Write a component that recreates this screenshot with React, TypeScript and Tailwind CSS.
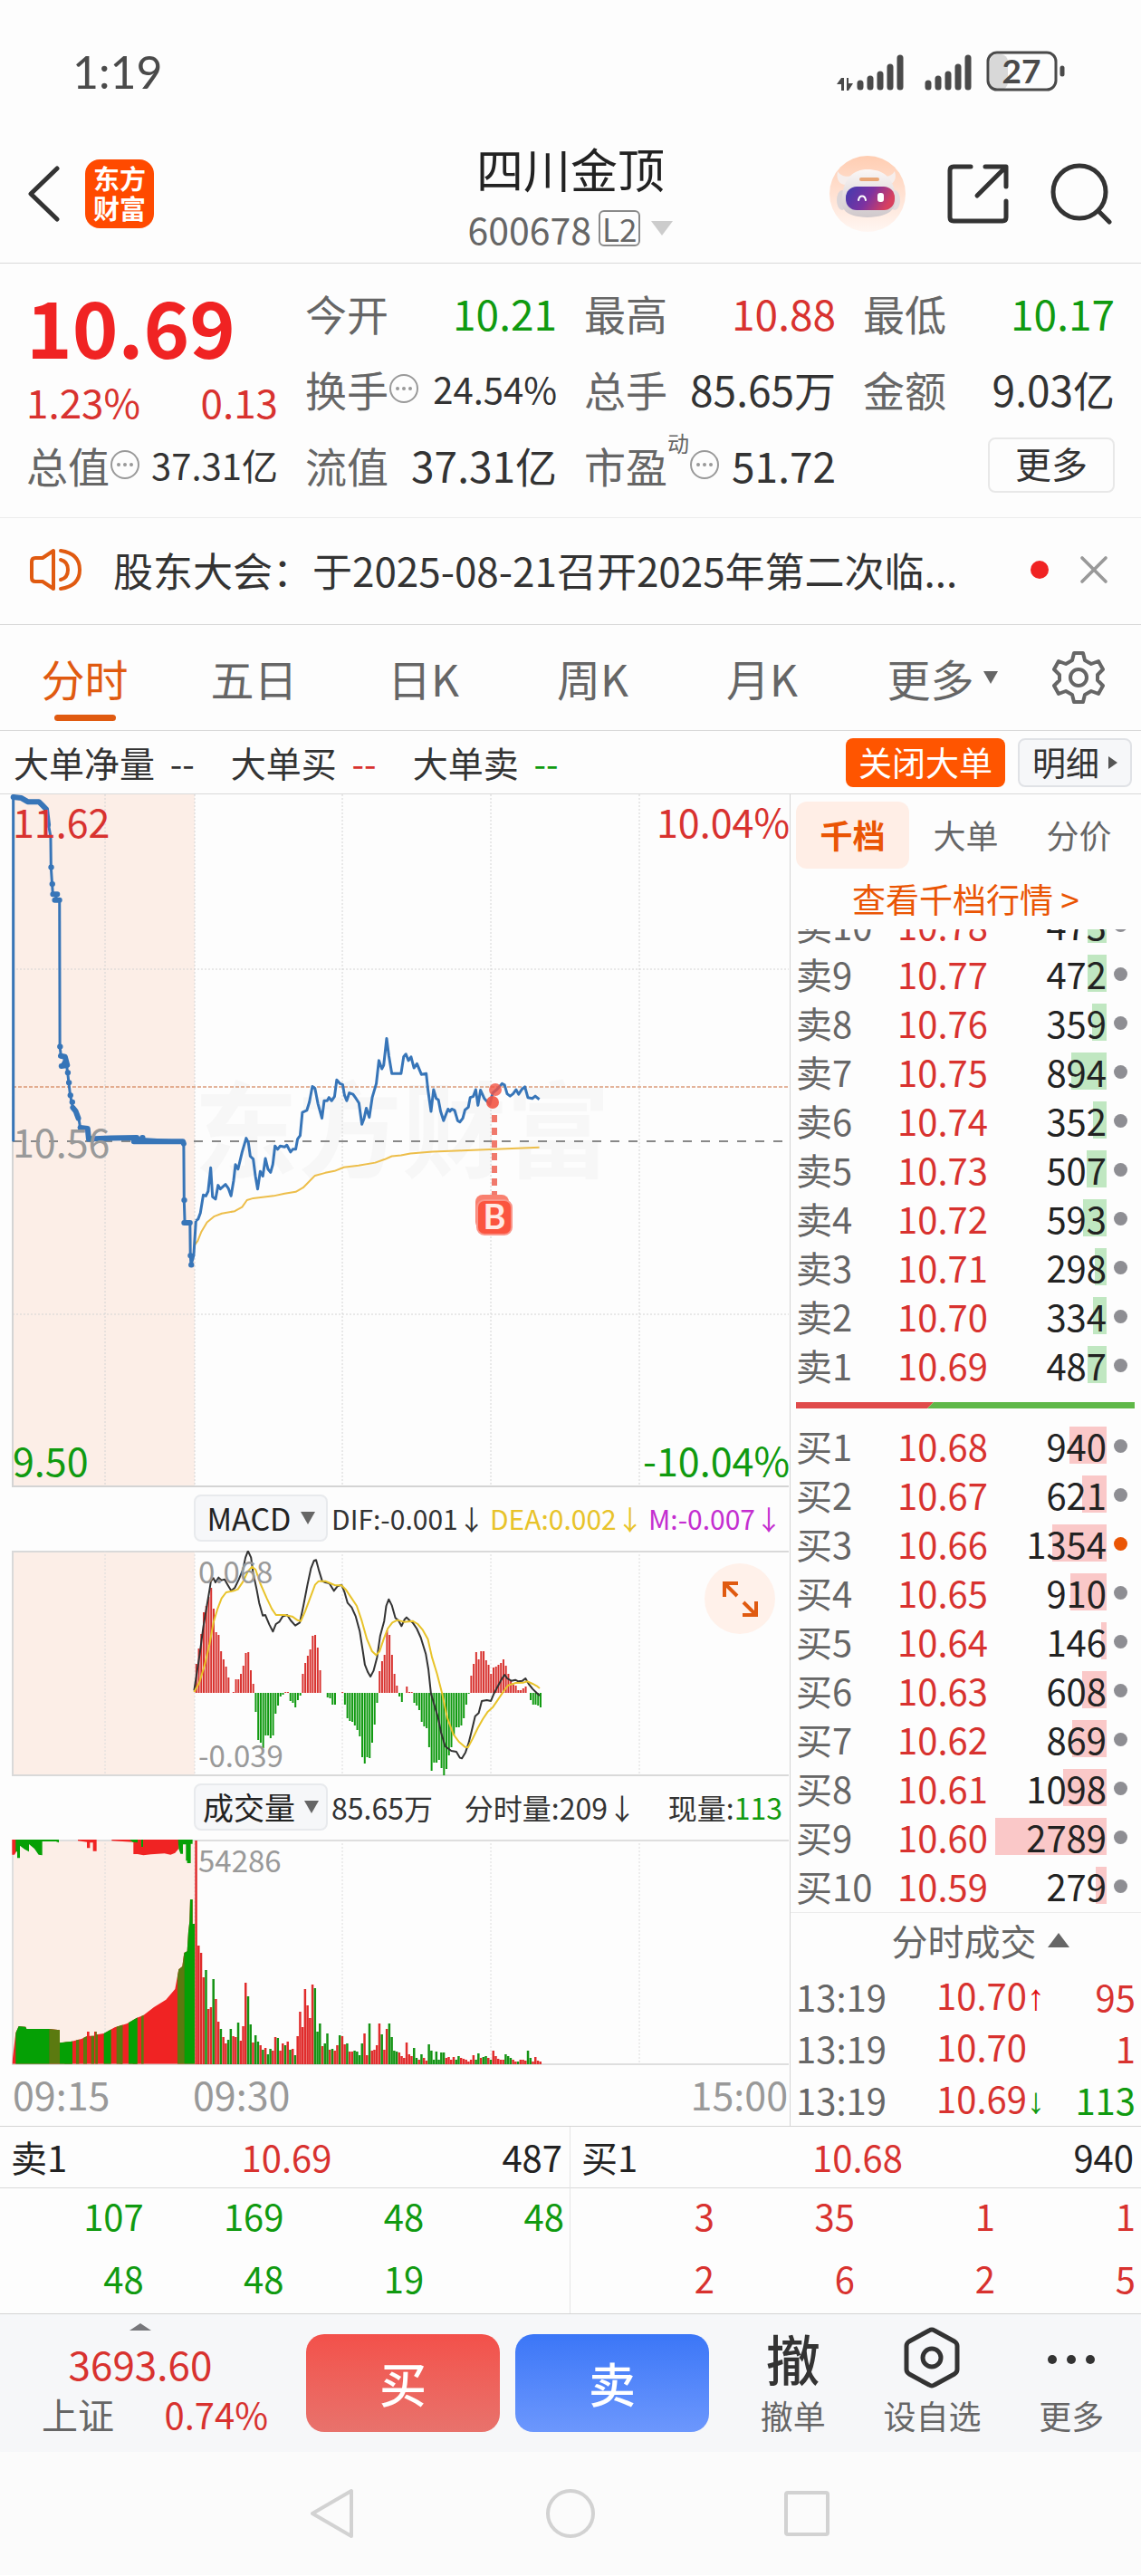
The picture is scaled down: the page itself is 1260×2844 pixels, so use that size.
import React, { useState } from 'react';
import { X } from 'lucide-react';
import clsx from 'clsx';

const MAX_VOLUME = 2789;

const asks = [
  { label: '卖10', price: '10.78', volume: 473 },
  { label: '卖9', price: '10.77', volume: 472 },
  { label: '卖8', price: '10.76', volume: 359 },
  { label: '卖7', price: '10.75', volume: 894 },
  { label: '卖6', price: '10.74', volume: 352 },
  { label: '卖5', price: '10.73', volume: 507 },
  { label: '卖4', price: '10.72', volume: 593 },
  { label: '卖3', price: '10.71', volume: 298 },
  { label: '卖2', price: '10.70', volume: 334 },
  { label: '卖1', price: '10.69', volume: 487 },
];

const bids = [
  { label: '买1', price: '10.68', volume: 940 },
  { label: '买2', price: '10.67', volume: 621 },
  { label: '买3', price: '10.66', volume: 1354, hot: true },
  { label: '买4', price: '10.65', volume: 910 },
  { label: '买5', price: '10.64', volume: 146 },
  { label: '买6', price: '10.63', volume: 608 },
  { label: '买7', price: '10.62', volume: 869 },
  { label: '买8', price: '10.61', volume: 1098 },
  { label: '买9', price: '10.60', volume: 2789 },
  { label: '买10', price: '10.59', volume: 279 },
];

const trades = [
  { time: '13:19', price: '10.70', arrow: '↑', volume: 95, up: true },
  { time: '13:19', price: '10.70', arrow: '', volume: 1, up: true },
  { time: '13:19', price: '10.69', arrow: '↓', volume: 113, up: false },
];

// MACD histogram, one value per minute
const macdBars = [
  32, 49, 65, 89, 96, 106, 116, 93, 67, 64, 46, 37, 29, 17, 0, 1, 15, 15, 21, 30, 44, 45, 25, 10, -21, -52, -55, -61,
  -47, -47, -50, -47, -23, -14, -4, -2, 1, 1, -9, -11, -16, -8, -3, 21, 33, 41, 48, 63, 64, 50, 25, 0, 0, -5, -6, -13,
  -13, 0, 0, 1, -13, -28, -31, -32, -36, -41, -48, -71, -78, -71, -72, -55, -35, -11, 24, 35, 42, 69, 64, 42, 21, 8,
  -4, -10, 0, 7, 1, 1, -11, -14, -19, -32, -37, -39, -60, -86, -77, -77, -74, -83, -91, -84, -69, -60, -47, -38, -38,
  -36, -28, -13, -1, 19, 32, 45, 37, 46, 46, 36, 31, 21, 28, 29, 31, 33, 37, 30, 21, 13, 9, 8, 3, 3, 5, 7, 0, -8, -13,
  -13, -14, -16,
];

// Volume per minute, a negative value is a falling minute
const volumeBars = [
  247, 131, 123, 96, -104, 61, 63, -94, 72, 47, -39, 30, 23, -27, -39, 31, 30, -46, 26, 42, 90, -75, -44, 24, -32, -25,
  21, -16, 18, -11, -17, 15, 30, -29, 15, 23, -21, 25, -16, 17, -10, 31, 58, 41, 83, 65, 51, 88, -84, -36, -45, 20, -23,
  -34, 16, -17, 15, 21, -32, 31, 22, -23, 14, 14, -15, -14, -10, -23, 34, 10, -45, 15, 16, 21, 45, -33, 16, 39, -45,
  -30, -15, -14, 13, 9, 7, 24, 11, 9, -18, -7, 5, -11, 7, 4, -22, -15, -5, -14, -5, -13, -13, 7, 8, 5, 8, -5, -9, 7, 6,
  5, 3, 5, 10, -5, -12, 7, -8, -9, 7, -5, 15, 9, 6, 5, 5, -11, -9, -7, 5, 3, -3, 5, 5, 4, -15, -7, 3, 8, 4, 3,
];

const auctionPath =
  'M36,785 36,38 58,42 75,50 105,50 115,58 125,65 130,95 137,125 138,192 141,228 143,250 155,250 148,263 161,263 162,580 165,600 178,605 166,622 180,620 183,636 186,658 190,685 197,712 205,720 213,735 217,755 237,757 240,780 300,778 370,777 385,780 495,785 497,790 498,912 500,961 514,962 515,1032 517,1052 524,1032 530,957';

const auctionHeavyPath =
  'M36,40 58,42 75,50 105,50 115,58 125,66 130,100 M143,250 155,250 M148,263 161,263 M164,600 176,602 182,620 166,622 M197,712 205,720 212,735 M217,755 237,757 240,780 300,778 370,777 M362,785 495,785 497,790 M498,961 514,961 M138,192h1 M141,228h1 M162,580h1 M183,636h1 M186,658h1 M190,685h1 M195,700h1 M385,777h1 M498,912h1 M515,1032h1 M517,1052h1';

const pricePath =
  'M530,957 536,953 542,940 550,901 557,903 563,893 570,842 575,905 583,910 590,880 596,888 610,878 618,887 625,903 632,870 637,835 644,845 655,808 666,778 672,788 677,817 685,823 691,860 697,888 704,850 711,860 718,822 725,845 732,852 738,835 744,795 751,802 758,795 770,797 776,793 786,808 792,802 800,802 805,780 812,772 818,722 830,718 837,700 845,666 852,670 860,703 871,735 877,697 885,697 890,690 897,697 905,688 911,652 920,660 927,662 932,685 938,697 945,680 955,683 963,692 971,702 979,748 985,735 991,713 999,733 1007,690 1018,660 1025,610 1033,628 1038,620 1046,562 1052,600 1060,638 1085,638 1092,602 1098,596 1105,610 1112,602 1120,626 1128,617 1140,640 1153,638 1158,675 1166,720 1173,673 1180,692 1186,695 1192,720 1200,740 1212,715 1217,720 1222,715 1230,718 1238,740 1244,743 1252,735 1258,717 1267,711 1272,690 1280,688 1287,673 1293,707 1300,674 1310,692 1325,705 1333,680 1345,672 1358,660 1365,663 1372,682 1380,687 1388,682 1396,673 1403,683 1412,672 1420,667 1428,690 1440,692 1448,687 1459,694';

const averagePath =
  'M526,1010 535,1000 545,980 560,960 580,947 600,941 635,936 655,927 668,912 685,908 740,903 770,898 800,894 820,885 835,873 852,859 880,853 905,849 930,841 970,837 1015,831 1040,824 1060,817 1085,815 1110,811 1170,807 1250,805 1340,802 1459,798';

const difPath =
  'M382,680 387,625 393,560 400,470 407,400 412,350 415,318 420,308 424,322 430,306 436,315 442,312 448,330 455,350 462,340 470,312 478,280 483,240 488,218 494,240 498,290 505,345 510,390 517,432 522,430 530,462 537,485 543,460 550,452 556,435 565,430 572,448 581,465 590,455 597,400 605,330 612,275 618,250 622,248 628,285 634,318 640,322 648,325 657,350 664,335 672,330 678,355 684,390 692,405 700,435 708,485 714,550 718,595 724,620 729,634 735,615 742,570 748,500 756,450 760,400 765,378 771,398 778,440 784,448 790,467 796,445 800,438 806,448 812,455 820,475 828,505 838,560 843,610 848,690 855,730 862,770 868,820 876,865 888,880 898,883 905,903 909,905 916,885 922,855 928,815 935,765 942,755 948,715 958,712 966,715 972,690 980,665 988,640 993,628 998,640 1006,648 1014,645 1020,650 1028,648 1034,640 1041,660 1048,675 1056,688 1062,697';

const deaPath =
  'M382,685 392,655 402,600 412,530 420,455 428,410 436,375 445,355 460,350 468,345 478,320 488,285 496,270 503,280 512,325 525,375 535,410 543,430 560,430 575,435 585,447 592,450 600,420 610,375 620,330 627,318 640,318 650,325 660,332 672,332 680,345 692,375 702,400 712,450 722,510 732,550 740,563 747,550 755,510 763,475 772,455 782,447 795,453 812,450 822,460 832,480 842,510 850,570 860,625 870,690 880,770 892,825 903,850 915,867 921,868 930,840 940,805 950,775 960,750 970,735 980,710 990,685 1000,663 1015,655 1030,654 1038,650 1048,658 1056,665 1062,673';

// Call auction volume, [x, width] of the darker stripes
const auctionGreen = [
  [22, 112], [168, 42], [314, 24], [396, 28], [580, 38],
];
const auctionOlive = [
  [134, 34], [184, 24], [222, 10], [246, 12], [272, 10], [286, 8], [356, 20], [368, 8], [410, 16], [438, 8], [558, 22],
];

const MoreDots: React.FC = () => (
  <svg className="w-[34px] h-[34px] shrink-0" viewBox="0 0 34 34">
    <circle cx="17" cy="17" r="15" fill="none" stroke="#999" strokeWidth="2" />
    <circle cx="10" cy="17" r="2" fill="#999" />
    <circle cx="17" cy="17" r="2" fill="#999" />
    <circle cx="24" cy="17" r="2" fill="#999" />
  </svg>
);

const StatusBar: React.FC = () => (
  <div className="flex h-[142px] items-center justify-between pt-4 pl-20 pr-[84px] text-[#4a4a4a]">
    <span className="text-[50px] leading-none font-[Lato,sans-serif]">1:19</span>
    <svg className="h-[50px] w-[252px]" viewBox="0 0 252 50">
      <g stroke="#4a4a4a" strokeWidth="7" strokeLinecap="round">
        <path d="M26 38V42M37 33V42M48 28V42M59 20V42M70 10V42" />
        <path d="M101 38V42M112 33V42M123 28V42M134 20V42M145 10V42" />
      </g>
      <path d="M0 39L5 32H8V46H5V39ZM11 32H13V38H18L13 46H11Z" fill="#4a4a4a" />
      <rect x="169" y="6" width="20" height="39" rx="8" fill="#d8d8d8" />
      <rect x="167" y="4" width="75" height="41" rx="10" fill="none" stroke="#4a4a4a" strokeWidth="3" />
      <path d="M249 21V28" stroke="#4a4a4a" strokeWidth="5" strokeLinecap="round" />
      <text x="204" y="38" fontSize="37" fontWeight="700" textAnchor="middle" fill="#4a4a4a" className="font-[Lato,sans-serif]">
        27
      </text>
    </svg>
  </div>
);

const RobotAvatar: React.FC = () => (
  <svg className="h-[84px] w-[84px]" viewBox="0 0 84 84">
    <defs>
      <linearGradient id="halo" x1="0" y1="0" x2="0" y2="1">
        <stop offset="0" stopColor="#ffcdb2" />
        <stop offset="1" stopColor="#fff6f2" />
      </linearGradient>
      <linearGradient id="visor" x1="0" y1="0" x2="1" y2="0.3">
        <stop offset="0" stopColor="#3f3cb0" />
        <stop offset="0.55" stopColor="#7d32a0" />
        <stop offset="1" stopColor="#d8405f" />
      </linearGradient>
      <linearGradient id="shell" x1="0" y1="0" x2="0" y2="1">
        <stop offset="0" stopColor="#fbf7f6" />
        <stop offset="1" stopColor="#cfc8cb" />
      </linearGradient>
    </defs>
    <circle cx="42" cy="42" r="42" fill="url(#halo)" />
    <path d="M9 17c-2 9 2 15 9 15l8-10c-8 2-14 0-17-5zM72 17c3 9-2 15-8 15l-8-10c8 2 13 0 16-5z" fill="#f6eeec" />
    <ellipse cx="14" cy="49" rx="6" ry="11" fill="#dcd6d8" />
    <ellipse cx="72" cy="49" rx="6" ry="11" fill="#e4dde0" />
    <path d="M42 15c16 0 29 8 31 30 1 14-6 22-31 23-25-1-30-9-28-23 2-20 12-30 28-30z" fill="url(#shell)" />
    <rect x="33" y="24" width="22" height="4" rx="2" fill="#e9a777" />
    <rect x="18" y="34" width="54" height="26" rx="12" fill="url(#visor)" />
    <path d="M32 49c1-6 7-6 8 0" fill="none" stroke="#fff" strokeWidth="2" strokeLinecap="round" />
    <rect x="53" y="41" width="7" height="10" rx="3" fill="#fff" />
  </svg>
);

const Header: React.FC = () => (
  <header className="grid grid-cols-3 items-center border-b border-[#d9d9d9] pt-2.5 pb-1">
    <div className="flex items-center gap-7 pb-2.5 pl-[30px]">
      <button aria-label="返回">
        <svg className="h-[62px] w-9" viewBox="0 0 36 62">
          <path d="M33 3L4 31L33 59" fill="none" stroke="#333" strokeWidth="5" strokeLinecap="round" strokeLinejoin="round" />
        </svg>
      </button>
      <div className="h-[76px] w-[76px] rounded-2xl bg-[#ff4a00] pt-1 text-center text-[29px] font-bold leading-[33px] text-white">
        <div>东方</div>
        <div>财富</div>
      </div>
    </div>
    <div className="text-center">
      <h1 className="text-[52px] leading-[68px] text-[#222]">四川金顶</h1>
      <button className="flex h-[66px] w-full items-center justify-center pb-0.5 text-[41px] leading-none text-[#666]">
        600678
        <span className="ml-2 rounded-md border-2 border-[#8a8a8a] px-0.5 text-[35px] leading-9">L2</span>
        <svg className="ml-3 h-4 w-6" viewBox="0 0 24 16">
          <path d="M0 0H24L12 16Z" fill="#ccc" />
        </svg>
      </button>
    </div>
    <div className="flex items-center justify-end gap-[46px] pr-8 pb-2.5">
      <button aria-label="助手">
        <RobotAvatar />
      </button>
      <button aria-label="分享">
        <svg className="h-[68px] w-[68px]" viewBox="0 0 68 68" fill="none" stroke="#333" strokeWidth="5" strokeLinecap="round" strokeLinejoin="round">
          <path d="M26 4H7Q3 4 3 8V60Q3 64 7 64H61Q65 64 65 60V42M42 4H65V26M64 5L33 36" />
        </svg>
      </button>
      <button aria-label="搜索">
        <svg className="h-[68px] w-[68px]" viewBox="0 0 68 68" fill="none" stroke="#333" strokeWidth="5" strokeLinecap="round">
          <circle cx="32" cy="32" r="29" />
          <path d="M53 53L65 65" />
        </svg>
      </button>
    </div>
  </header>
);

interface QuoteItemProps {
  label: string;
  value: string;
  color?: string;
  dots?: boolean;
  sup?: string;
}

const QuoteItem: React.FC<QuoteItemProps> = ({ label, value, color = 'text-[#333]', dots, sup }) => (
  <div className="flex h-[84px] items-center justify-between whitespace-nowrap">
    <dt className="flex items-center text-[46px] text-[#666]">
      {label}
      {sup && <sup className="mb-6 text-[24px]">{sup}</sup>}
      {dots && <MoreDots />}
    </dt>
    <dd className={clsx(color, dots && !sup ? 'text-[40px]' : 'text-[46px]')}>{value}</dd>
  </div>
);

const QuotePanel: React.FC = () => (
  <section className="grid grid-cols-4 gap-x-[30px] border-b border-[#ececec] px-[29px] pt-3 pb-4 leading-none">
    <div>
      <div className="flex h-28 items-center text-[86px] font-bold text-[#f02323]">10.69</div>
      <div className="flex h-14 items-center justify-between text-[44px] text-[#d8322f]">
        <span>1.23%</span>
        <span>0.13</span>
      </div>
      <dl>
        <QuoteItem label="总值" value="37.31亿" dots />
      </dl>
    </div>
    <dl>
      <QuoteItem label="今开" value="10.21" color="text-[#109a10]" />
      <QuoteItem label="换手" value="24.54%" dots />
      <QuoteItem label="流值" value="37.31亿" />
    </dl>
    <dl>
      <QuoteItem label="最高" value="10.88" color="text-[#d8322f]" />
      <QuoteItem label="总手" value="85.65万" />
      <QuoteItem label="市盈" value="51.72" sup="动" dots />
    </dl>
    <div>
      <dl>
        <QuoteItem label="最低" value="10.17" color="text-[#109a10]" />
        <QuoteItem label="金额" value="9.03亿" />
      </dl>
      <div className="flex h-[84px] items-center justify-end">
        <button className="h-[61px] rounded-lg border-2 border-[#e8e8e8] px-7 pb-1 text-[40px] text-[#333]">更多</button>
      </div>
    </div>
  </section>
);

const NewsBar: React.FC = () => (
  <div className="flex h-[118px] items-center border-b border-[#d9d9d9] pb-1 pl-[33px] pr-[26px]">
    <svg className="h-12 w-[58px] shrink-0" viewBox="0 0 58 48" fill="none" stroke="#e05a10" strokeWidth="4" strokeLinejoin="round">
      <path d="M26 3V45L14 37H6Q2 37 2 33V15Q2 11 6 11H14Z" />
      <path d="M34 13Q42 15 42 24Q42 33 34 35M34 3Q55 6 55 24Q55 42 34 45" strokeLinecap="round" />
    </svg>
    <a href="#news" className="ml-[34px] whitespace-nowrap text-[44px] leading-[66px] text-[#333]">
      股东大会：于2025-08-21召开2025年第二次临...
    </a>
    <span className="ml-auto h-5 w-5 shrink-0 rounded-full bg-[#f02323]" />
    <button aria-label="关闭" className="ml-6 shrink-0">
      <X className="h-[52px] w-[52px] text-[#999]" strokeWidth={1.7} />
    </button>
  </div>
);

const periods = ['分时', '五日', '日K', '周K', '月K', '更多'];

const PeriodTabs: React.FC = () => {
  const [active, setActive] = useState('分时');

  return (
    <nav className="flex h-[117px] border-b border-[#d9d9d9]">
      <div className="grid flex-1 grid-cols-6">
        {periods.map((period) => (
          <button
            key={period}
            onClick={() => setActive(period)}
            className={clsx(
              'relative flex items-center justify-center text-[48px] leading-none',
              period === active ? 'text-[#e05a10]' : 'text-[#666]',
              period === '更多' && 'pl-6'
            )}
          >
            {period}
            {period === '更多' && (
              <svg className="ml-2.5 h-3.5 w-4" viewBox="0 0 16 14">
                <path d="M0 0H16L8 14Z" fill="#666" />
              </svg>
            )}
            {period === active && <span className="absolute bottom-2.5 h-[7px] w-[68px] rounded-full bg-[#e05a10]" />}
          </button>
        ))}
      </div>
      <button aria-label="设置" className="flex w-[138px] items-center justify-center">
        <svg className="h-[60px] w-[60px]" viewBox="0 0 60 60" fill="none" stroke="#666" strokeWidth="4" strokeLinejoin="round">
          <path d="M25 3H35L37 11L44 15L52 12L57 21L51 27V33L57 39L52 48L44 45L37 49L35 57H25L23 49L16 45L8 48L3 39L9 33V27L3 21L8 12L16 15L23 11Z" />
          <circle cx="30" cy="30" r="9" />
        </svg>
      </button>
    </nav>
  );
};

const BigOrderBar: React.FC = () => (
  <div className="flex h-[70px] items-center justify-between border-b border-[#d9d9d9] pl-[15px] pr-2.5 text-[39px] leading-none text-[#333]">
    <div className="flex gap-10">
      <span>大单净量 <span className="ml-2">--</span></span>
      <span>大单买 <span className="ml-2 text-[#d8322f]">--</span></span>
      <span>大单卖 <span className="ml-2 text-[#109a10]">--</span></span>
    </div>
    <div className="flex gap-3.5 text-[37px]">
      <button className="h-[54px] rounded-lg bg-[#ff5500] px-3.5 text-white">关闭大单</button>
      <button className="flex h-[54px] items-center gap-2.5 rounded-lg border-2 border-[#e0e2e6] bg-[#f6f7f9] px-3.5">
        明细
        <svg className="h-3.5 w-2.5" viewBox="0 0 10 14">
          <path d="M0 0V14L10 7Z" fill="#555" />
        </svg>
      </button>
    </div>
  </div>
);

const gridX = [378, 542, 706];

const PriceChart: React.FC = () => (
  <div className="relative">
    <span className="absolute top-[307px] left-[214px] text-[115px] font-bold leading-none text-[#f7f7f7]">东方财富</span>
    <svg className="relative block h-[765px] w-full" viewBox="0 0 872 765" preserveAspectRatio="none">
      <rect x="14" y="0" width="201" height="764" fill="#fceee7" />
      <g stroke="#d4d4d4" strokeDasharray="2 2">
        {[116, 215, ...gridX].map((x) => (
          <path key={x} d={`M${x} 0V764`} />
        ))}
        <path d="M14 193H871M14 574H871" />
      </g>
      <path d="M14 0V764H871" fill="none" stroke="#d4d4d4" strokeWidth="2" />
      <path d="M14 383H871" stroke="#888" strokeWidth="2" strokeDasharray="10 10" />
      <path d="M14 323H871" stroke="#c96a38" strokeWidth="1" strokeDasharray="4 2" />
      <g transform="scale(.4082 .5102) translate(0 -34)" fill="none" strokeLinejoin="round">
        <path d={averagePath} stroke="#edbe4a" strokeWidth="2" vectorEffect="non-scaling-stroke" />
        <path d={auctionPath} stroke="#3775b8" strokeWidth="3" vectorEffect="non-scaling-stroke" />
        <path d={auctionHeavyPath} stroke="#3775b8" strokeWidth="6" strokeLinecap="round" vectorEffect="non-scaling-stroke" />
        <path d={pricePath} stroke="#3775b8" strokeWidth="3" vectorEffect="non-scaling-stroke" />
      </g>
      <path d="M546 354V442" stroke="#f0796c" strokeWidth="6" strokeDasharray="8 6" />
      <circle cx="544" cy="340" r="7" fill="#f25443" fillOpacity="0.9" />
      <circle cx="547" cy="326" r="7" fill="#f25443" fillOpacity="0.8" />
      <rect x="525" y="442" width="37" height="38" rx="8" fill="#f9806f" />
      <rect x="527" y="448" width="38" height="38" rx="8" fill="#fb543f" stroke="#f9958a" strokeWidth="2" />
      <text x="546" y="480" fontSize="38" fontWeight="700" textAnchor="middle" fill="#ffe9e5" className="font-[Lato,sans-serif]">
        B
      </text>
    </svg>
    <div className="absolute inset-0 flex flex-col justify-between pb-0.5 pl-3.5 text-[43px] leading-[58px]">
      <div className="flex justify-between text-[#d8322f]">
        <span>11.62</span>
        <span>10.04%</span>
      </div>
      <span className="text-[#999]">10.56</span>
      <div className="flex justify-between text-[#109a10]">
        <span>9.50</span>
        <span>-10.04%</span>
      </div>
    </div>
  </div>
);

const IndicatorSelect: React.FC<{ name: string; children: React.ReactNode }> = ({ name, children }) => (
  <div className="flex h-[70px] items-center pb-0.5 pl-[214px] pr-2 leading-none text-[#333]">
    <button className="flex h-[52px] w-[148px] shrink-0 items-center justify-center gap-2.5 rounded-lg border-2 border-[#e8eaed] bg-[#f6f7f9] text-[34px] text-[#222]">
      {name}
      <svg className="h-3.5 w-4" viewBox="0 0 16 14">
        <path d="M0 0H16L8 14Z" fill="#666" />
      </svg>
    </button>
    {children}
  </div>
);

const MacdChart: React.FC = () => (
  <div className="relative">
    <svg className="block h-[249px] w-full" viewBox="0 0 872 249" preserveAspectRatio="none">
      <rect x="14" y="0" width="201" height="248" fill="#fceee7" />
      <path d="M14 1H871M14 0V248H871" fill="none" stroke="#d9d9d9" strokeWidth="2" />
      <g stroke="#dcdcdc" strokeDasharray="2 2">
        {[116, 215, ...gridX].map((x) => (
          <path key={x} d={`M${x} 0V248`} />
        ))}
      </g>
      {macdBars.map((value, i) => (
        <rect
          key={i}
          x={215.8 + i * 2.735}
          y={value > 0 ? 157 - value : 157}
          width="2"
          height={Math.abs(value)}
          fill={value > 0 ? '#d8322f' : '#109a10'}
        />
      ))}
      <g transform="scale(.5612 .3333) translate(0 -217)" fill="none" strokeLinejoin="round">
        <path d={difPath} stroke="#333" strokeWidth="2" vectorEffect="non-scaling-stroke" />
        <path d={deaPath} stroke="#e8c32a" strokeWidth="2" vectorEffect="non-scaling-stroke" />
      </g>
    </svg>
    <div className="absolute inset-0 flex flex-col justify-between pt-0.5 pb-1 pl-[219px] text-[33px] leading-10 text-[#999]">
      <span>0.068</span>
      <span>-0.039</span>
    </div>
    <button aria-label="全屏" className="absolute top-3.5 right-4 h-[78px] w-[78px] rounded-full bg-[#fff1ea]">
      <svg className="h-full w-full" viewBox="0 0 78 78" fill="none" stroke="#e05a10" strokeWidth="4">
        <path d="M22 37V22H37M23 23L36 36M57 42V57H42M56 56L43 43" />
      </svg>
    </button>
  </div>
);

const VolumeChart: React.FC = () => (
  <div className="relative">
    <svg className="block h-[249px] w-full" viewBox="0 0 872 249" preserveAspectRatio="none">
      <rect x="14" y="0" width="201" height="248" fill="#fceee7" />
      <path d="M14 1H871M14 0V248H871" fill="none" stroke="#dedede" strokeWidth="2" />
      <g stroke="#dcdcdc" strokeDasharray="2 2">
        {[116, 215, ...gridX].map((x) => (
          <path key={x} d={`M${x} 0V248`} />
        ))}
      </g>
      <clipPath id="auctionArea">
        <path d="M10,773V770L22,670 32,648 55,650 58,657 134,657 168,661V703L205,699 240,690 258,681V666H266V680H282V666H290V676L314,672 350,652 390,640 424,620 445,612 480,585 520,560 550,525 562,460 574,450 580,405 590,400 594,335 598,300 600,228H608V309H615V773Z" />
      </clipPath>
      {/* Call auction, drawn at three units per pixel */}
      <g transform="translate(10 -10) scale(.3333)">
        <g clipPath="url(#auctionArea)">
          <rect x="10" y="200" width="606" height="574" fill="#f02323" />
          {auctionOlive.map(([x, w]) => (
            <rect key={x} x={x} y="200" width={w} height="574" fill="#5b7a10" />
          ))}
          {auctionGreen.map(([x, w]) => (
            <rect key={x} x={x} y="200" width={w} height="574" fill="#05a005" />
          ))}
        </g>
        <path d="M10,30H24V70L18,80H10ZM228,30H290V68H278V40H268V58H258V38L228,34ZM340,30H562V60L550,74 535,80 515,76 470,79 445,82 426,78H412V38L340,34Z" fill="#f02323" />
        <path d="M22,30H165V40L155,36 110,36V82L98,80 84,60 66,45V70L52,62 36,50V91H27V70H22ZM400,30H426V40L410,38ZM438,30H444V54H438ZM560,30H608V44H602V108H590V100H586V46H576V77H568L562,60Z" fill="#05a005" />
      </g>
      {volumeBars.map((value, i) => (
        <rect
          key={i}
          x={215.3 + i * 2.735}
          y={248 - Math.abs(value)}
          width="2.5"
          height={Math.abs(value)}
          fill={value > 0 ? '#e02c2c' : '#149314'}
        />
      ))}
    </svg>
    <span className="absolute top-0.5 left-[219px] text-[33px] leading-10 text-[#999]">54286</span>
  </div>
);

const Charts: React.FC = () => (
  <div className="min-w-0 flex-1">
    <PriceChart />
    <IndicatorSelect name="MACD">
      <div className="ml-1 flex flex-1 justify-between whitespace-nowrap text-[30px]">
        <span>DIF:-0.001↓</span>
        <span className="text-[#e8c32a]">DEA:0.002↓</span>
        <span className="text-[#c42fd0]">M:-0.007↓</span>
      </div>
    </IndicatorSelect>
    <MacdChart />
    <IndicatorSelect name="成交量">
      <div className="ml-1 flex flex-1 justify-between whitespace-nowrap text-[32px]">
        <span>85.65万</span>
        <span>分时量:209↓</span>
        <span>
          现量:<span className="text-[#109a10]">113</span>
        </span>
      </div>
    </IndicatorSelect>
    <VolumeChart />
    <div className="flex h-[67px] items-center pb-1 pl-3.5 pr-0.5 text-[43px] leading-none text-[#999]">
      <span className="w-[199px]">09:15</span>
      <span>09:30</span>
      <span className="ml-auto">15:00</span>
    </div>
  </div>
);

interface Level {
  label: string;
  price: string;
  volume: number;
  hot?: boolean;
}

const DepthTable: React.FC<{ levels: Level[]; barColor: string }> = ({ levels, barColor }) => (
  <table className="w-full shrink-0 table-fixed text-[40px] leading-none">
    <colgroup>
      <col className="w-[118px]" />
      <col className="w-[103px]" />
      <col />
      <col className="w-[38px]" />
    </colgroup>
    <tbody>
      {levels.map((level) => (
        <tr key={level.label} className="h-[54px]">
          <td className="pl-1.5 text-[#666]">{level.label}</td>
          <td className="text-[#d8322f]">{level.price}</td>
          <td className="relative text-right text-[#222]">
            <span
              className={clsx('absolute right-0 top-1.5 h-[41px]', barColor)}
              style={{ width: `${(level.volume / MAX_VOLUME) * 96}%` }}
            />
            <span className="relative">{level.volume}</span>
          </td>
          <td>
            <span className={clsx('ml-2 block h-[15px] w-[15px] rounded-full', level.hot ? 'bg-[#ea5504]' : 'bg-[#8e8e93]')} />
          </td>
        </tr>
      ))}
    </tbody>
  </table>
);

const OrderBook: React.FC = () => (
  <aside className="w-[388px] shrink-0 border-l border-[#d4d4d4]">
    <div className="flex px-1.5 pt-2 text-[36px] leading-none text-[#666]">
      <button className="h-[74px] w-[125px] rounded-xl bg-[#ffeee6] pb-0.5 font-bold text-[#ea5504]">千档</button>
      <button className="flex-1 pb-0.5">大单</button>
      <button className="flex-1 pb-0.5">分价</button>
    </div>
    <a href="#depth" className="flex h-[67px] items-center justify-center text-[37px] leading-none text-[#ea5504]">
      查看千档行情 &gt;
    </a>
    <div className="flex h-[508px] flex-col justify-end overflow-hidden">
      <DepthTable levels={asks} barColor="bg-[#c0e7c1]" />
    </div>
    <svg className="mt-3.5 mb-3.5 block h-[7px] w-full" viewBox="0 0 387 7" preserveAspectRatio="none">
      <path d="M6 0H158L151 7H6Z" fill="#e04b4b" />
      <path d="M158 0H380V7H151Z" fill="#5fb848" />
    </svg>
    <DepthTable levels={bids} barColor="bg-[#fac8c8]" />
    <button className="mt-0.5 flex h-[64px] w-full items-center justify-center gap-3 border-t border-[#ececec] pb-1 pl-8 text-[40px] leading-none text-[#666]">
      分时成交
      <svg className="h-4 w-6" viewBox="0 0 24 16">
        <path d="M0 16H24L12 0Z" fill="#666" />
      </svg>
    </button>
    <table className="w-full table-fixed text-[40px] leading-none">
      <tbody>
        {trades.map((trade, i) => (
          <tr key={i} className="h-[57px]">
            <td className="w-[161px] pl-1.5 text-[#666]">{trade.time}</td>
            <td className="w-[130px] whitespace-nowrap text-[#d8322f]">
              {trade.price}
              <span className={clsx("font-['Liberation_Sans',sans-serif] font-bold", trade.up ? 'text-[#e01010]' : 'text-[#109a10]')}>
                {trade.arrow}
              </span>
            </td>
            <td className={clsx('pr-1.5 text-right', trade.up ? 'text-[#d8322f]' : 'text-[#109a10]')}>{trade.volume}</td>
          </tr>
        ))}
      </tbody>
    </table>
  </aside>
);

interface QueueProps {
  label: string;
  price: string;
  total: number;
  color: string;
  rows: (number | null)[][];
}

const Queue: React.FC<QueueProps> = ({ label, price, total, color, rows }) => (
  <div className="border-r border-[#e4e4e4] last:border-r-0">
    <div className="grid h-[68px] grid-cols-3 items-center border-b border-[#d9d9d9] pb-0.5 pl-3 pr-2">
      <span>{label}</span>
      <span className="text-center text-[#d8322f]">{price}</span>
      <span className="text-right">{total}</span>
    </div>
    <div className="pl-2.5">
      <table className="w-full table-fixed">
        <tbody>
          {rows.map((row, i) => (
            <tr key={i} className="h-[69px]">
              {row.map((value, j) => (
                <td key={j} className={clsx('pr-1.5 pb-2.5 text-right', color)}>
                  {value}
                </td>
              ))}
            </tr>
          ))}
        </tbody>
      </table>
    </div>
  </div>
);

const ActionBar: React.FC = () => (
  <footer className="flex h-[153px] items-center border-t border-[#d4d4d4] bg-[#f6f7f9] leading-none">
    <button className="flex h-full w-[310px] flex-col items-center pt-2.5 text-[#d8322f]">
      <svg className="h-2 w-6" viewBox="0 0 24 8">
        <path d="M0 8H24L12 0Z" fill="#77777b" />
      </svg>
      <span className="mt-2 text-[44px] leading-[56px]">3693.60</span>
      <span className="ml-8 flex w-[250px] justify-between text-[40px] leading-[56px]">
        <span className="text-[#666]">上证</span>
        <span>0.74%</span>
      </span>
    </button>
    <div className="ml-7 flex gap-[17px] text-[52px] font-medium text-white">
      <button className="h-[108px] w-[214px] rounded-[20px] bg-gradient-to-b from-[#f3504a] to-[#e8726c]">买</button>
      <button className="h-[108px] w-[214px] rounded-[20px] bg-gradient-to-b from-[#3b76f7] to-[#6c97fd]">卖</button>
    </div>
    <div className="ml-4 grid flex-1 grid-cols-3 text-[36px] text-[#666]">
      <button className="flex flex-col items-center">
        <span className="text-[60px] font-medium leading-[70px] text-[#333]">撤</span>
        <span className="leading-[56px]">撤单</span>
      </button>
      <button className="flex flex-col items-center">
        <svg className="h-[70px] w-[70px]" viewBox="0 0 70 70" fill="none" stroke="#333" strokeWidth="5" strokeLinejoin="round">
          <path d="M32 5Q35 3 38 5L60 17Q63 19 63 22V48Q63 51 60 53L38 65Q35 67 32 65L10 53Q7 51 7 48V22Q7 19 10 17Z" />
          <circle cx="35" cy="35" r="10" />
        </svg>
        <span className="leading-[56px]">设自选</span>
      </button>
      <button className="flex flex-col items-center">
        <svg className="h-[70px] w-[70px]" viewBox="0 0 70 70" fill="#333">
          <circle cx="14" cy="37" r="5" />
          <circle cx="35" cy="37" r="5" />
          <circle cx="56" cy="37" r="5" />
        </svg>
        <span className="leading-[56px]">更多</span>
      </button>
    </div>
  </footer>
);

const SystemNav: React.FC = () => (
  <div className="flex h-[136px] items-center justify-center gap-[208px] bg-[#fbfbfb]">
    <button aria-label="后退">
      <svg className="h-[58px] w-[54px]" viewBox="0 0 54 58" fill="none" stroke="#d2d2d2" strokeWidth="4" strokeLinejoin="round">
        <path d="M47 4V54L4 29Z" />
      </svg>
    </button>
    <button aria-label="主屏幕">
      <svg className="h-[54px] w-[54px]" viewBox="0 0 54 54" fill="none" stroke="#d2d2d2" strokeWidth="4">
        <circle cx="27" cy="27" r="25" />
      </svg>
    </button>
    <button aria-label="最近任务">
      <svg className="h-[54px] w-[54px]" viewBox="0 0 54 54" fill="none" stroke="#d2d2d2" strokeWidth="4">
        <rect x="3" y="4" width="46" height="46" rx="2" />
      </svg>
    </button>
  </div>
);

export default function App() {
  return (
    <div className="bg-[#fdfdfd] font-['Noto_Sans_CJK_SC',sans-serif]">
      <StatusBar />
      <Header />
      <QuotePanel />
      <NewsBar />
      <PeriodTabs />
      <BigOrderBar />

      {/* Charts and order book */}
      <main className="flex">
        <Charts />
        <OrderBook />
      </main>

      {/* Order queues */}
      <section className="grid grid-cols-2 border-t border-[#d4d4d4] text-[40px] leading-none text-[#222]">
        <Queue label="卖1" price="10.69" total={487} color="text-[#109a10]" rows={[[107, 169, 48, 48], [48, 48, 19, null]]} />
        <Queue label="买1" price="10.68" total={940} color="text-[#d8322f]" rows={[[3, 35, 1, 1], [2, 6, 2, 5]]} />
      </section>

      <ActionBar />
      <SystemNav />
    </div>
  );
}
